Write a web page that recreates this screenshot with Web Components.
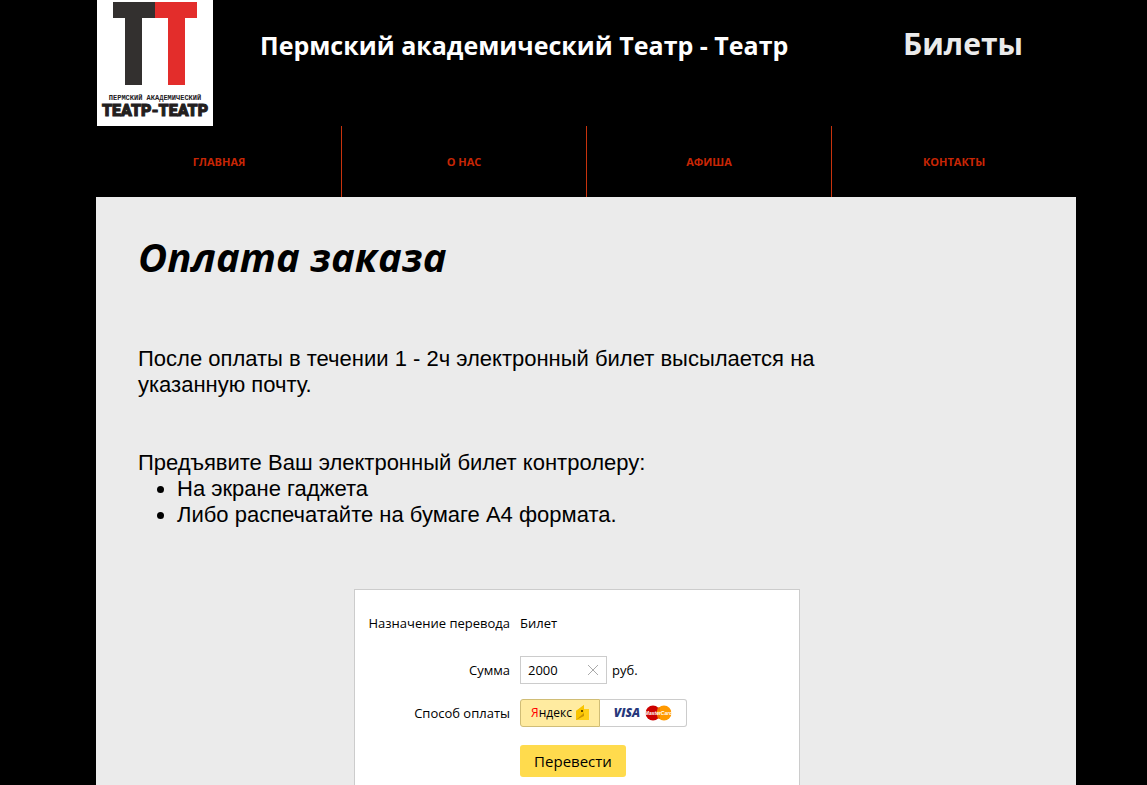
<!DOCTYPE html>
<html lang="ru">
<head>
<meta charset="utf-8">
<meta name="viewport" content="width=device-width, initial-scale=1">
<title>Оплата заказа</title>
<style>
html { scrollbar-width: none; background: #000; }
body { margin: 0; font-family: "Liberation Sans", Arial, sans-serif; }
</style>
</head>
<body>
<theatre-page>
  <site-header slot="header"></site-header>
  <site-nav slot="nav"></site-nav>
  <order-info></order-info>
  <payment-form></payment-form>
</theatre-page>
<script>
const define = (name, html, setup) => {
  const t = document.createElement('template');
  t.innerHTML = html;
  customElements.define(name, class extends HTMLElement {
    constructor() {
      super();
      this.attachShadow({ mode: 'open' }).append(t.content.cloneNode(true));
      if (setup) setup(this.shadowRoot);
    }
  });
};

define('theatre-logo', `
<style>
:host { display: flex; flex-direction: column; align-items: center; width: 116px; height: 126px; background: #fff; color: #23201e; overflow: hidden; }
svg { display: block; }
.small { font: bold 7px/8px "Liberation Mono", monospace; margin-top: 8px; white-space: nowrap; }
.big { font: 900 16px/18px Roboto, sans-serif; -webkit-text-stroke: 1px #23201e; white-space: nowrap; }
</style>
<svg width="84" height="86" viewBox="0 0 84 86" aria-hidden="true">
  <path d="M0 2H42V18H29V85H12V18H0Z" fill="#33302f"/>
  <path d="M42 2H84V18H72V85H55V18H42Z" fill="#e32d2b"/>
</svg>
<span class="small">ПЕРМСКИЙ АКАДЕМИЧЕСКИЙ</span>
<span class="big">ТЕАТР-ТЕАТР</span>`);

define('site-header', `
<style>
:host { display: grid; grid-template-columns: 116px 1fr auto; column-gap: 47px; padding: 0 53px 0 1px; color: #fff; font-family: "Open Sans", sans-serif; }
h1 { margin: 0; padding-top: 27px; font-size: 25px; line-height: 36px; }
a { padding-top: 24px; font-size: 30px; line-height: 40px; font-weight: bold; color: #ebebeb; text-decoration: none; }
</style>
<theatre-logo></theatre-logo>
<h1>Пермский академический Театр - Театр</h1>
<a href="#tickets">Билеты</a>`);

define('site-nav', `
<style>
:host { display: block; font-family: "Open Sans", sans-serif; }
nav { display: grid; grid-template-columns: repeat(4, 1fr); }
a { border-left: 1px solid #c8330d; color: #c82605; text-align: center; text-decoration: none; font-size: 11px; line-height: 71px; font-weight: bold; }
a:first-child { border-color: transparent; }
</style>
<nav><a href="#home">ГЛАВНАЯ</a><a href="#about">О НАС</a><a href="#playbill">АФИША</a><a href="#contacts">КОНТАКТЫ</a></nav>`);

define('order-info', `
<style>
:host { display: block; color: #000; }
h2 { margin: 0 0 63px; font: italic bold 40px/52px "Open Sans", sans-serif; }
p, ul { margin: 0; font-size: 22px; line-height: 26px; max-width: 700px; }
p + p { margin-top: 52px; }
ul { padding-left: 39px; }
</style>
<h2>Оплата заказа</h2>
<p>После оплаты в течении 1 - 2ч электронный билет высылается на указанную почту.</p>
<p>Предъявите Ваш электронный билет контролеру:</p>
<ul><li>На экране гаджета</li><li>Либо распечатайте на бумаге А4 формата.</li></ul>`);

define('clearable-amount', `
<style>
:host { display: flex; align-items: center; box-sizing: border-box; width: 87px; height: 28px; border: 1px solid #ccc; background: #fff; }
input { flex: 1; min-width: 0; box-sizing: border-box; height: 26px; border: 0; padding: 0 0 0 7px; outline: 0; background: none; font: inherit; color: #000; }
button { display: grid; place-items: center; width: 26px; height: 26px; border: 0; padding: 0; background: none; }
</style>
<input type="text" inputmode="numeric" value="2000" aria-label="Сумма">
<button type="button" aria-label="Очистить"><svg width="12" height="12" viewBox="0 0 12 12"><path d="M1 1L11 11M11 1L1 11" stroke="#aaa" fill="none"/></svg></button>`,
root => root.querySelector('button').addEventListener('click', () => { root.querySelector('input').value = ''; }));

define('payment-methods', `
<style>
:host { display: flex; }
label { display: flex; align-items: center; justify-content: center; gap: 5px; box-sizing: border-box; height: 28px; cursor: pointer; border: 1px solid #ccc; background: #fff; }
.wallet { width: 80px; gap: 4px; border-radius: 3px 0 0 3px; }
.card { width: 87px; border-left: 0; border-radius: 0 3px 3px 0; }
label:has(:checked) { background: #ffeba0; border-color: #d0bd76; }
input { appearance: none; position: absolute; margin: 0; width: 1px; height: 1px; opacity: 0; }
.ya { font: 12px/18px "Open Sans", sans-serif; color: #000; }
.ya b { font-weight: normal; color: #f00; }
.visa { font: italic 800 12px/18px "Open Sans", sans-serif; color: #26377b; }
svg { display: block; flex: none; }
</style>
<label class="wallet"><input type="radio" name="method" checked><span class="ya"><b>Я</b>ндекс</span>
<svg width="13" height="16" viewBox="0 0 13 16" aria-hidden="true"><path d="M0 6L8 0V4H13V15H0Z" fill="#fc0"/><path d="M0 6L8 0V9L0 15Z" fill="#f9c400"/><path d="M0 15L8 9V4H13V15Z" fill="#ffcf16"/><path d="M0 15L8 11V8Z" fill="#c99300"/><ellipse cx="6" cy="6" rx="1" ry="1" fill="#332600"/></svg></label>
<label class="card"><input type="radio" name="method"><span class="visa">VISA</span>
<svg width="27" height="16" viewBox="0 0 27 16" role="img" aria-label="MasterCard"><circle cx="8" cy="8" r="7.5" fill="#c00"/><circle cx="19" cy="8" r="7.5" fill="#f90"/><path d="M12 3H15M12 5H15M12 11H15M12 13H15" fill="none" stroke="#e45600"/><text x="13.5" y="10" text-anchor="middle" font-family="Liberation Sans, sans-serif" font-style="italic" font-weight="bold" font-size="5" fill="#fff">MasterCard</text></svg></label>`);

define('payment-form', `
<style>
:host { display: block; margin: 61px 0 0 216px; max-width: 446px; box-sizing: border-box; border: 1px solid #ccc; background: #fff; color: #000; font: 13px/18px "Open Sans", sans-serif; }
form { display: grid; grid-template-columns: 155px 1fr; grid-template-rows: 32px 28px 28px 35px; gap: 15px 10px; padding: 19px 0 30px; align-items: center; }
.label { text-align: right; }
.purpose { align-self: start; line-height: 28px; }
.amount { display: flex; align-items: center; gap: 5px; }
.send { grid-column: 2; place-self: end start; width: 106px; height: 32px; border: 0; border-radius: 3px; padding: 0; background: #ffdb4d; color: #000; font: 15px/20px "Open Sans", sans-serif; }
</style>
<form>
<span class="label purpose">Назначение перевода</span><span class="purpose">Билет</span>
<span class="label">Сумма</span><span class="amount"><clearable-amount></clearable-amount>руб.</span>
<span class="label">Способ оплаты</span><payment-methods></payment-methods>
<button class="send" type="button">Перевести</button>
</form>`);

define('theatre-page', `
<style>
:host { display: block; padding-left: 25px; }
.page { max-width: 980px; margin: 0 auto; }
main { background: #ebebeb; padding: 34px 42px 80px; }
</style>
<div class="page"><header><slot name="header"></slot><slot name="nav"></slot></header><main><slot></slot></main></div>`);
</script>
</body>
</html>
